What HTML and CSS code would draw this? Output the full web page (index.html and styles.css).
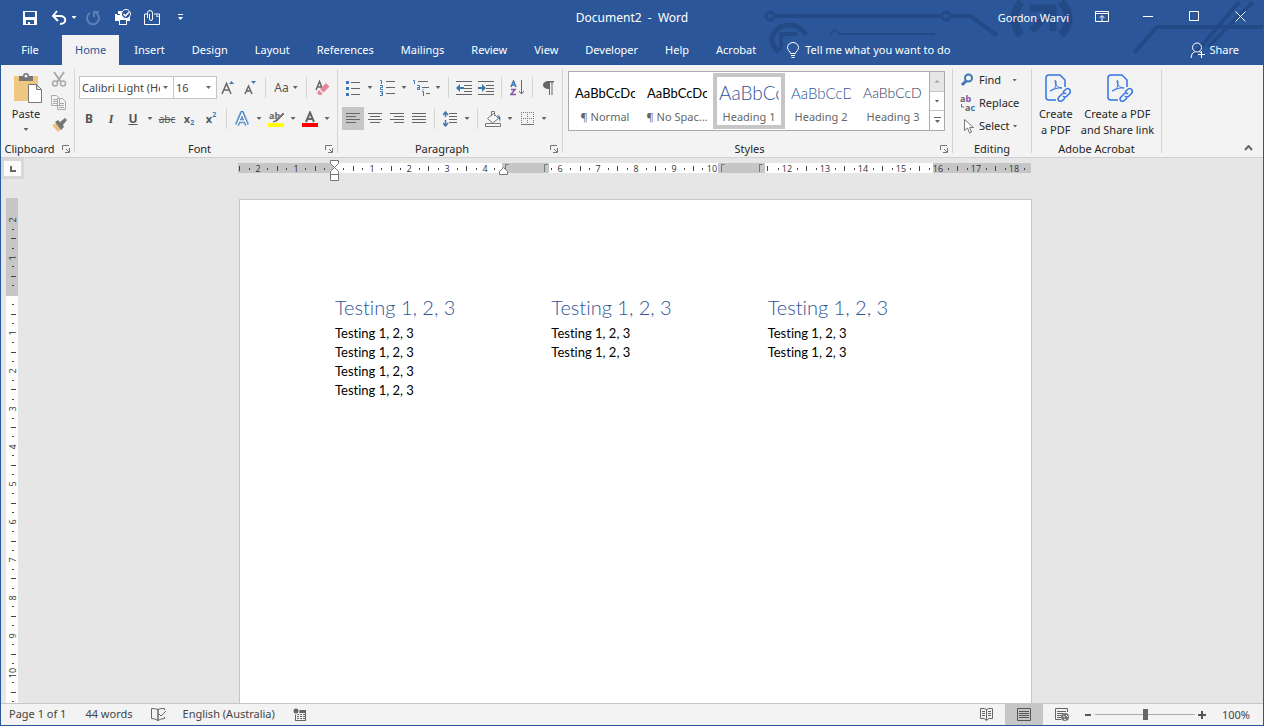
FILE: index.html
```html
<!DOCTYPE html>
<html lang="en-AU">
<head>
<meta charset="utf-8">
<title>Document2 - Word</title>
<link rel="stylesheet" href="styles.css">
</head>
<body>
<div class="window">
  <header class="top">
    <svg class="circuit" width="524" height="66" viewBox="0 0 524 66" fill="none" stroke="#234a86" stroke-width="4" aria-hidden="true">
      <g stroke-width="3"><circle cx="31" cy="16" r="4"/><circle cx="207" cy="16" r="4"/></g>
      <path d="M35 16H203M211 16H231L258 35"/>
      <path d="M92 35a4 4 0 0 1 8-1M99 34H196" stroke-width="2"/>
      <path d="M40 52Q32 45 33 38Q37 25 50 25Q61 25 67 35" stroke-width="5"/>
      <path d="M42 50V34H58" stroke-width="4"/>
      <path d="M282 2Q269 18 282 35M322 2Q337 18 322 35" stroke-width="8"/>
      <path d="M291 8H314V31M312 10L293 31" stroke-width="7"/>
      <path d="M395 53L418 27H524M500 2L455 55M514 2L469 47"/>
    </svg>
    <div class="titlebar">
      <div class="quick">
        <button class="qbtn" aria-label="Save"><svg width="16" height="16"><path fill="#fff" fill-rule="evenodd" d="M1 1h14v14H1zM3 2v5h10V2zM4 10v4h2v-2h2v2h4v-4z"/></svg></button>
        <button class="qbtn undo" aria-label="Undo"><svg width="16" height="16" fill="none" stroke="#fff" stroke-width="2"><path d="M6 1L2 6l5 5M2 6h7c7 0 7 8 0 8"/></svg></button>
        <button class="more" aria-label="Undo history"><i class="caret light"></i></button>
        <button class="qbtn redo" aria-label="Redo" disabled><svg width="16" height="16" fill="none" stroke="#5f80b3" stroke-width="2"><path d="M5 3a6 6 0 1 0 6 0M9 7V2h5"/></svg></button>
        <button class="qbtn" aria-label="Quick print"><svg width="18" height="17"><path fill="#fff" d="M1 5h2v1h3V5H4V2h4v4h8v6h-3v4H5v-4H1z"/><circle cx="12" cy="5" r="4.500" fill="#2b579a" stroke="#fff"/><path d="M9.500 5l2 2 3.500-4" fill="none" stroke="#fff" stroke-width="1.500"/><path d="M6 11h6v4H6z" fill="#2b579a"/></svg></button>
        <button class="qbtn attach" aria-label="Email attachment"><svg width="18" height="16" fill="none" stroke="#fff"><path d="M4 4H1.500v10.500h15V4H11M13 6h2v1M4.500 8V3a2 2 0 0 1 5 0v6a1.500 1.500 0 0 1-3 0V4"/></svg></button>
        <button class="qbtn" aria-label="Customize toolbar"><svg width="9" height="8"><path fill="#fff" d="M2 0h5v1H2zM2 3h5L4.500 6z"/></svg></button>
      </div>
      <h1 class="doc-title">Document2&nbsp; -&nbsp; Word</h1>
      <div class="account">
        <button class="user">Gordon Warvi</button>
        <button class="winbtn" aria-label="Ribbon display options"><svg width="14" height="11" fill="none" stroke="#fff"><path d="M.5.5h13v10H.5zM1 2.500h12M7 10V5M4.500 7L7 4.500 9.500 7"/></svg></button>
        <button class="winbtn" aria-label="Minimize"><svg width="10" height="10"><path stroke="#fff" d="M0 5.500h10"/></svg></button>
        <button class="winbtn" aria-label="Maximize"><svg width="10" height="10"><path fill="none" stroke="#fff" d="M.5.5h9v9h-9z"/></svg></button>
        <button class="winbtn" aria-label="Close"><svg width="11" height="11"><path stroke="#fff" d="M.5.5l10 10M10.500.5l-10 10"/></svg></button>
      </div>
    </div>
    <nav class="tabs">
      <button class="tab file">File</button>
      <button class="tab active">Home</button>
      <button class="tab">Insert</button>
      <button class="tab">Design</button>
      <button class="tab">Layout</button>
      <button class="tab">References</button>
      <button class="tab">Mailings</button>
      <button class="tab">Review</button>
      <button class="tab">View</button>
      <button class="tab">Developer</button>
      <button class="tab">Help</button>
      <button class="tab">Acrobat</button>
      <button class="tab tell"><svg width="12" height="17" fill="none" stroke="#fff"><path d="M3.500 11.500c0-2-3-3-3-6a5.500 5 0 0 1 11 0c0 3-3 4-3 6zM4 13.500h4M4.500 15.500h3"/></svg>Tell me what you want to do</button>
      <button class="share"><svg width="15" height="17" fill="none" stroke="#fff"><circle cx="7" cy="5.500" r="4.500"/><path d="M1 16q0-5 4-6.500M8 12.500h7M11.500 9v7M9 9.500l2 1"/></svg>Share</button>
    </nav>
  </header>

  <section class="ribbon" aria-label="Home">
    <div class="group clipboard">
      <div class="body">
        <button class="paste"><svg width="30" height="31"><path fill="#eec880" d="M1 3h24v25H1z"/><path fill="#777" d="M6 3h4q0-3 3-3t3 3h4v5H6z"/><circle cx="13" cy="3" r="1.500" fill="#f3f3f3"/><path fill="#fff" stroke="#777" d="M15.500 11.500h8l5 5v13h-13zM23.500 11.500v5h5"/></svg><span>Paste</span><i class="caret"></i></button>
        <div class="clip-tools">
          <button aria-label="Cut"><svg width="16" height="16" fill="none" stroke="#aaa" stroke-width="1.500"><path d="M3 1l7 10M13 1L6 11" stroke-width="2"/><circle cx="4" cy="12.500" r="2.500"/><circle cx="12" cy="12.500" r="2.500"/></svg></button>
          <button aria-label="Copy"><svg width="16" height="15" fill="#f3f3f3" stroke="#aaa"><path d="M.5.5h5l3 3v7h-8zM2 4.500h4M2 6.500h4M2 8.500h4M6.500 3.500h5l3 3v8h-8zM8 8.500h5M8 10.500h5M8 12.500h5"/></svg></button>
          <button aria-label="Format painter"><svg width="17" height="15"><path fill="#eec080" d="M1 7l5-2 5 5-4 4z"/><path fill="#777" d="M4 4l3-2 2 2 5-4 2 2-4 5 1 2-3 3z"/></svg></button>
        </div>
      </div>
      <div class="caption"><span>Clipboard</span><button class="launch" aria-label="Clipboard settings"><svg width="8" height="8"><use href="#launcher"/></svg></button></div>
    </div>

    <div class="group font">
      <div class="body rows">
        <div class="row">
          <label class="combo family"><select aria-label="Font"><option>Calibri Light (Headings)</option></select><i class="caret"></i></label>
          <label class="combo size"><select aria-label="Font size"><option>16</option></select><i class="caret"></i></label>
          <button class="tool" aria-label="Grow font"><svg width="16" height="16"><path d="M2 14L6.500 3.500 11 14M4 10h5" fill="none" stroke="#666" stroke-width="1.500"/><path fill="#3e77b5" d="M9 4l2.500-3L14 4z"/></svg></button>
          <button class="tool" aria-label="Shrink font"><svg width="16" height="16"><path d="M3 14L6.500 6 10 14M4 11h5" fill="none" stroke="#666" stroke-width="1.500"/><path fill="#3e77b5" d="M9 1h5l-2.500 3z"/></svg></button>
          <span class="sep"></span>
          <button class="tool case" aria-label="Change case">Aa<i class="caret"></i></button>
          <span class="sep"></span>
          <button class="tool" aria-label="Clear formatting"><svg width="16" height="16"><path d="M2 10L5.500 1.500 8 8M3 7h4" fill="none" stroke="#666" stroke-width="1.500"/><path fill="#e8879a" d="M6 9l6-6 3.500 3.500-6 6zM5 10l3.500 3.500L7 15H5l-2-2z"/></svg></button>
        </div>
        <div class="row">
          <button class="tool bold">B</button>
          <button class="tool italic">I</button>
          <button class="tool underline">U</button>
          <button class="more" aria-label="Underline style"><i class="caret"></i></button>
          <button class="tool strike">abc</button>
          <button class="tool script">x<sub>2</sub></button>
          <button class="tool script">x<sup>2</sup></button>
          <span class="sep"></span>
          <button class="tool" aria-label="Text effects"><svg width="16" height="16" fill="none"><path d="M3 14L8 2l5 12M5 10h6" stroke="#9dc0e6" stroke-width="5"/><path d="M3 14L8 2l5 12M5 10h6" stroke="#2f6eae" stroke-width="3"/><path d="M3 14L8 2.500l5 11.500M5 10h6" stroke="#fff" stroke-width="1.500"/></svg></button>
          <button class="more" aria-label="Text effects options"><i class="caret"></i></button>
          <button class="tool" aria-label="Text highlight"><svg width="17" height="16"><text x="1" y="8" class="glyph">ab</text><path d="M15 2L8 9l-3 2 4-1 7-7z" fill="#777" stroke="#777"/><path fill="#ff0" d="M0 12h16v4H0z"/></svg></button>
          <button class="more" aria-label="Highlight colour"><i class="caret"></i></button>
          <button class="tool" aria-label="Font colour"><svg width="16" height="16"><path d="M4 11L8 1.500 12 11M5.500 8h5" fill="none" stroke="#666" stroke-width="2"/><path fill="red" d="M0 12h16v4H0z"/></svg></button>
          <button class="more" aria-label="Font colour options"><i class="caret"></i></button>
        </div>
      </div>
      <div class="caption"><span>Font</span><button class="launch" aria-label="Font settings"><svg width="8" height="8"><use href="#launcher"/></svg></button></div>
    </div>

    <div class="group paragraph">
      <div class="body rows">
        <div class="row">
          <button class="tool" aria-label="Bullets"><svg width="14" height="16"><path stroke="#666" d="M5 2.500h9M5 8.500h9M5 14.500h9"/><path fill="#3e77b5" d="M0 1h3v3H0zM0 7h3v3H0zM0 13h3v3H0z"/></svg></button>
          <button class="more" aria-label="Bullet library"><i class="caret"></i></button>
          <button class="tool" aria-label="Numbering"><svg width="15" height="17"><path stroke="#666" d="M6 2.500h9M6 8.500h9M6 14.500h9"/><path fill="none" stroke="#3e77b5" d="M0 1.500h1.500V5M0 6.500h2.500v2H.5v2H3M0 12.500h2.500v4H0M1 14.500h2"/></svg></button>
          <button class="more" aria-label="Numbering library"><i class="caret"></i></button>
          <button class="tool" aria-label="Multilevel list"><svg width="17" height="17"><path stroke="#666" d="M5 2.500h10M9 8.500h7M13 14.500h4"/><path fill="none" stroke="#3e77b5" d="M0 1.500h1.500V5M4 6.500h2.500v4h-2v-2h2M9 12.500h1.500V17M10 10v1"/></svg></button>
          <button class="more" aria-label="List library"><i class="caret"></i></button>
          <span class="sep"></span>
          <button class="tool" aria-label="Decrease indent"><svg width="16" height="14"><path stroke="#666" d="M0 .5h16M8 4.500h8M8 7.500h8M8 10.500h8M0 13.500h16"/><path fill="#3e77b5" d="M0 7l4-4v3h4v2H4v3z"/></svg></button>
          <button class="tool" aria-label="Increase indent"><svg width="16" height="14"><path stroke="#666" d="M0 .5h16M8 4.500h8M8 7.500h8M8 10.500h8M0 13.500h16"/><path fill="#3e77b5" d="M8 7L4 3v3H0v2h4v3z"/></svg></button>
          <span class="sep"></span>
          <button class="tool" aria-label="Sort"><svg width="15" height="16" fill="none"><path stroke="#3e77b5" stroke-width="1.500" d="M1 7l2.500-6L6 7M2 5h3"/><path stroke="#8c4fa8" stroke-width="1.500" d="M1 9.500h4L1 14.500h5"/><path stroke="#666" d="M11.500 0v14M9 11l2.500 3 2.500-3"/></svg></button>
          <span class="sep"></span>
          <button class="tool" aria-label="Show paragraph marks"><svg width="11" height="14"><path fill="#666" d="M11 0v1.500H9.500V14h-1V1.500H7V14H6V8C-2 8-2 0 6 0z"/></svg></button>
        </div>
        <div class="row">
          <button class="tool pressed" aria-label="Align left"><svg width="14" height="11"><path stroke="#666" d="M0 .5h14M0 3.500h10M0 6.500h14M0 9.500h10"/></svg></button>
          <button class="tool" aria-label="Centre"><svg width="14" height="11"><path stroke="#666" d="M0 .5h14M2 3.500h10M0 6.500h14M2 9.500h10"/></svg></button>
          <button class="tool" aria-label="Align right"><svg width="14" height="11"><path stroke="#666" d="M0 .5h14M4 3.500h10M0 6.500h14M4 9.500h10"/></svg></button>
          <button class="tool" aria-label="Justify"><svg width="14" height="11"><path stroke="#666" d="M0 .5h14M0 3.500h14M0 6.500h14M0 9.500h14"/></svg></button>
          <span class="sep"></span>
          <button class="tool" aria-label="Line spacing"><svg width="14" height="16" fill="none"><path stroke="#666" d="M6 2.500h8M6 5.500h8M6 8.500h8M6 11.500h8"/><path stroke="#3e77b5" stroke-width="1.500" d="M2.500 1v5M0 4l2.500-3L5 4M2.500 9v6M0 12l2.500 3L5 12"/></svg></button>
          <button class="more" aria-label="Line spacing options"><i class="caret"></i></button>
          <span class="sep"></span>
          <button class="tool" aria-label="Shading"><svg width="17" height="16"><path fill="#f8f8f8" stroke="#777" d="M2.500 7.500l6-5 5 5-6 4.500zM6.500 5V.5h3V5M.5 12.500h15v3H.5z"/><path fill="#3e77b5" d="M12 4q5 1 3 7l-1-3z"/></svg></button>
          <button class="more" aria-label="Shading colour"><i class="caret"></i></button>
          <button class="tool" aria-label="Borders"><svg width="13" height="13" fill="none" stroke="#777"><path stroke-dasharray="1 1" d="M0 .5h13M0 6.500h13M.5 0v12M6.500 0v12M12.500 0v12"/><path d="M0 12.500h13"/></svg></button>
          <button class="more" aria-label="Border options"><i class="caret"></i></button>
        </div>
      </div>
      <div class="caption"><span>Paragraph</span><button class="launch" aria-label="Paragraph settings"><svg width="8" height="8"><use href="#launcher"/></svg></button></div>
    </div>

    <div class="group styles">
      <div class="body">
        <div class="gallery">
          <button class="style"><b>AaBbCcDc</b><span>¶ Normal</span></button>
          <button class="style"><b>AaBbCcDc</b><span>¶ No Spac...</span></button>
          <button class="style h1 chosen"><b>AaBbCc</b><span>Heading 1</span></button>
          <button class="style h2"><b>AaBbCcD</b><span>Heading 2</span></button>
          <button class="style h3"><b>AaBbCcD</b><span>Heading 3</span></button>
          <div class="scroller">
            <button aria-label="Scroll up" disabled><i class="caret up"></i></button>
            <button aria-label="Scroll down"><i class="caret"></i></button>
            <button aria-label="More styles"><svg width="7" height="7"><path fill="#666" d="M0 0h7v1H0zM1 3h5L3.500 6z"/></svg></button>
          </div>
        </div>
      </div>
      <div class="caption"><span>Styles</span><button class="launch" aria-label="Styles pane"><svg width="8" height="8"><use href="#launcher"/></svg></button></div>
    </div>

    <div class="group editing">
      <div class="body list">
        <button><svg width="16" height="14"><circle cx="8.500" cy="5" r="3.500" fill="none" stroke="#3e77b5" stroke-width="2"/><path d="M6 8l-4 4" stroke="#3e77b5" stroke-width="3"/></svg><span class="find">Find</span><i class="caret"></i></button>
        <button><svg width="16" height="18"><text x="0" y="8" class="glyph">a<tspan class="violet">b</tspan></text><text x="5" y="17" class="glyph">a<tspan class="blue">c</tspan></text><path d="M1.500 10v3H4" fill="none" stroke="#3e77b5"/></svg><span>Replace</span></button>
        <button><svg width="16" height="15"><path d="M4.500.5v11l3-2.500 2 5 2-1-2-4.500h4z" fill="#fff" stroke="#777"/></svg><span>Select</span><i class="caret"></i></button>
      </div>
      <div class="caption"><span>Editing</span></div>
    </div>

    <div class="group acrobat">
      <div class="body">
        <button><svg width="26" height="29"><use href="#pdf"/></svg><span>Create<br>a PDF</span></button>
        <button><svg width="26" height="29"><use href="#pdf"/></svg><span>Create a PDF<br>and Share link</span></button>
      </div>
      <div class="caption"><span>Adobe Acrobat</span></div>
    </div>
    <button class="collapse" aria-label="Collapse ribbon"><svg width="9" height="6"><path d="M1 5l3.500-4L8 5" fill="none" stroke="#666" stroke-width="2"/></svg></button>
  </section>

  <main class="workspace">
    <aside class="side">
      <button class="tabstop" aria-label="Tab selector"><svg width="6" height="6"><path d="M1 0v5h5" fill="none" stroke="#666" stroke-width="2"/></svg></button>
      <svg class="vruler" width="12" height="506">
        <path fill="#fff" d="M0 0h12v506H0z"/><path fill="#c6c6c6" d="M0 0h12v98H0z"/>
        <path stroke="#444" d="M5 40.500h5M5 78.500h5M5 116.500h5M5 154.500h5M5 191.500h5M5 229.500h5M5 267.500h5M5 305.500h5M5 343.500h5M5 380.500h5M5 418.500h5M5 456.500h5M5 494.500h5"/>
        <path stroke="#444" d="M6 31.500h2M6 50.500h2M6 68.500h2M6 87.500h2M6 106.500h2M6 125.500h2M6 144.500h2M6 163.500h2M6 182.500h2M6 201.500h2M6 220.500h2M6 238.500h2M6 257.500h2M6 276.500h2M6 295.500h2M6 314.500h2M6 333.500h2M6 352.500h2M6 371.500h2M6 390.500h2M6 408.500h2M6 427.500h2M6 446.500h2M6 465.500h2M6 484.500h2M6 503.500h2"/>
        <g class="num" transform="rotate(-90)">
          <text x="-22" y="10">2</text><text x="-60" y="10">1</text><text x="-135" y="10">1</text><text x="-173" y="10">2</text><text x="-211" y="10">3</text><text x="-249" y="10">4</text><text x="-286" y="10">5</text><text x="-324" y="10">6</text><text x="-362" y="10">7</text><text x="-400" y="10">8</text><text x="-438" y="10">9</text><text x="-475" y="10">10</text>
        </g>
      </svg>
    </aside>
    <div class="canvas">
      <svg class="hruler" width="793" height="22">
        <path fill="#fff" d="M0 3h793v10H0z"/>
        <path fill="#c6c6c6" d="M0 3h96v10H0zM264 3h47v10h-47zM480 3h47v10h-47zM695 3h98v10h-98z"/>
        <path stroke="#444" d="M1.500 6v5M39.500 6v5M77.500 6v5M115.500 6v5M153.500 6v5M190.500 6v5M228.500 6v5M342.500 6v5M379.500 6v5M417.500 6v5M455.500 6v5M529.500 6v5M568.500 6v5M606.500 6v5M644.500 6v5M681.500 6v5M719.500 6v5M757.500 6v5"/>
        <path stroke="#444" d="M11.500 8v2M29.500 8v2M48.500 8v2M67.500 8v2M86.500 8v2M105.500 8v2M124.500 8v2M143.500 8v2M162.500 8v2M181.500 8v2M200.500 8v2M219.500 8v2M238.500 8v2M256.500 8v2M313.500 8v2M332.500 8v2M351.500 8v2M370.500 8v2M389.500 8v2M408.500 8v2M427.500 8v2M446.500 8v2M464.500 8v2M540.500 8v2M559.500 8v2M578.500 8v2M597.500 8v2M616.500 8v2M635.500 8v2M654.500 8v2M672.500 8v2M691.500 8v2M710.500 8v2M729.500 8v2M748.500 8v2M767.500 8v2M786.500 8v2"/>
        <path fill="none" stroke="#777" d="M267.500 12V4.500h3M306.500 12V4.500h3M483.500 12V4.500h3M521.500 12V4.500h3"/>
        <g class="num">
          <text x="20" y="12">2</text><text x="58" y="12">1</text><text x="134" y="12">1</text><text x="171" y="12">2</text><text x="209" y="12">3</text><text x="247" y="12">4</text><text x="322" y="12">6</text><text x="360" y="12">7</text><text x="398" y="12">8</text><text x="436" y="12">9</text><text x="474" y="12">10</text><text x="549" y="12">12</text><text x="587" y="12">13</text><text x="625" y="12">14</text><text x="663" y="12">15</text><text x="700" y="12">16</text><text x="738" y="12">17</text><text x="776" y="12">18</text>
        </g>
        <path fill="#fff" stroke="#777" d="M92.500.5h8v3l-4 4-4-4zM96.500 7.500l4 4v9h-8v-9zM92.500 14.500h8M265.500 7.500l4 4v3h-8v-3z"/>
      </svg>
      <article class="page">
        <section><h2>Testing 1, 2, 3</h2><p>Testing 1, 2, 3</p><p>Testing 1, 2, 3</p><p>Testing 1, 2, 3</p><p>Testing 1, 2, 3</p></section>
        <section><h2>Testing 1, 2, 3</h2><p>Testing 1, 2, 3</p><p>Testing 1, 2, 3</p></section>
        <section><h2>Testing 1, 2, 3</h2><p>Testing 1, 2, 3</p><p>Testing 1, 2, 3</p></section>
      </article>
    </div>
  </main>

  <footer class="status">
    <button class="pages">Page 1 of 1</button>
    <button class="words">44 words</button>
    <button aria-label="Proofing"><svg width="15" height="13" fill="none" stroke="#666"><path d="M7 1.500Q4 .5.5.5v10Q4 10.500 7 12.500zV12.500Q9 11 13.500 10.500V9M7 1.500Q8 .5 13.500.5V2M8 6l2 2 5-5"/></svg></button>
    <button class="language">English (Australia)</button>
    <button aria-label="Macro recording"><svg width="13" height="13"><path fill="#666" fill-rule="evenodd" d="M2 2h11v11H2zM3 5v7h9V5z"/><path stroke="#666" stroke-dasharray="2 1" d="M4 6.500h8M4 8.500h8M4 10.500h8"/><circle cx="3" cy="3" r="3.500" fill="#f3f3f3"/><circle cx="3" cy="3" r="2.500" fill="#666"/></svg></button>
    <div class="view">
      <button aria-label="Read mode"><svg width="13" height="13" fill="none" stroke="#666"><path d="M6.500 1.500L4 .5H.5v10H4l2.500 2 2.500-2h3.500V.5H9L6.500 1.500V12M2 3.500h3M2 5.500h3M2 7.500h3M8 3.500h3M8 5.500h3M8 7.500h3"/></svg></button>
      <button class="on" aria-label="Print layout"><svg width="14" height="13" fill="none" stroke="#555"><path d="M.5.5h13v12H.5zM2 3.500h10M2 5.500h10M2 7.500h10M2 9.500h10"/></svg></button>
      <button aria-label="Web layout"><svg width="15" height="14"><path d="M12.500 4V.5H.5v11H6M2 3.500h9M2 5.500h6M2 7.500h4M2 9.500h4" fill="none" stroke="#666"/><circle cx="10" cy="9" r="4" fill="#777"/><path d="M8 8l2 1M11 7l2 2M9 11l2 1" stroke="#f3f3f3"/></svg></button>
      <button class="step" aria-label="Zoom out"><svg width="6" height="6"><path d="M0 3h6" stroke="#555" stroke-width="2"/></svg></button>
      <input class="zoom" type="range" min="0" max="100" value="50" aria-label="Zoom">
      <button class="step" aria-label="Zoom in"><svg width="8" height="8"><path d="M0 4h8M4 0v8" stroke="#555" stroke-width="2"/></svg></button>
      <button class="percent">100%</button>
    </div>
  </footer>
</div>
<svg class="defs" width="0" height="0" aria-hidden="true">
  <symbol id="launcher"><path d="M.5 5V.5H7M4 4l3 3M7.500 3v4.500H3" fill="none" stroke="#777"/></symbol>
  <symbol id="pdf"><g fill="none" stroke="#3574e2" stroke-width="1.500"><path d="M11 26H4q-3 0-3-3V4q0-3 3-3h11l5 5v7"/><path d="M5 17q7-2 6-10-1-2-1 1 1 6 7 6-4-1-12 3" stroke-width="1"/><path d="M18 18l2-2q3-3 5 0 1 2-1 4l-2 2q-2 2-4 0M21 20q-2-2-4 0l-3 3q-2 2 0 4 2 1 4-1l2-2"/></g></symbol>
</svg>
</body>
</html>
```

FILE: styles.css
```css
* { box-sizing: border-box; }
html, body { height: 100%; margin: 0; }
body { font: 11px/16px "Noto Sans", "Open Sans", sans-serif; color: #262626; }
button { font: inherit; color: inherit; background: none; border: 0; padding: 0; margin: 0; display: flex; align-items: center; justify-content: center; white-space: nowrap; }
svg { display: block; flex: none; }
.defs { position: absolute; }
.window { height: 100%; display: flex; flex-direction: column; border: 1px solid #2b579a; border-top: 0; background: #e6e6e6; }

.caret { flex: none; width: 5px; height: 3px; background: #666; clip-path: polygon(0 0, 100% 0, 50% 100%); }
.caret.light { background: #fff; }
.caret.up { background: #aaa; clip-path: polygon(0 100%, 100% 100%, 50% 0); }

/* Title bar and tabs */
.top { position: relative; background: #2b579a; color: #fff; }
.circuit { position: absolute; top: 0; right: 0; }
.titlebar { position: relative; display: grid; grid-template-columns: 1fr auto 1fr; height: 35px; }
.quick { display: flex; align-items: center; padding-left: 19px; }
.qbtn { width: 20px; height: 24px; }
.undo { margin-left: 9px; }
.quick .more { width: 10px; }
.redo { margin: 0 10px 0 4px; }
.attach { margin: 0 8px 0 9px; }
.doc-title { margin: 0; font: inherit; font-size: 12px; line-height: 35px; }
.account { display: flex; justify-content: flex-end; }
.user { margin-right: 10px; }
.winbtn { width: 46px; height: 32px; }
.tabs { position: relative; display: flex; height: 30px; }
.tab { padding: 0 12px; margin-right: 3px; }
.tab.file { width: 61px; padding: 0 3px 0 0; margin: 0; }
.tab.active { padding: 0 13px; background: #f3f3f3; color: #2b579a; }
.tab.tell { margin-left: 4px; gap: 6px; }
.share { margin-left: auto; padding: 0 24px; gap: 4px; }

/* Ribbon */
.ribbon { display: flex; height: 93px; padding: 4px 0; background: #f3f3f3; border-bottom: 1px solid #d0d0d0; }
.group { flex: none; display: flex; flex-direction: column; border-right: 1px solid #d5d5d5; }
.body { flex: 1; display: flex; }
.caption { display: flex; align-items: center; height: 9px; }
.caption span { flex: 1; text-align: center; }
.launch { width: 16px; height: 12px; }
.clipboard { width: 74px; }
.paste { width: 50px; padding-top: 4px; flex-direction: column; justify-content: flex-start; }
.paste svg { margin-left: 3px; }
.paste .caret { margin-top: 6px; }
.paste span { margin-top: 2px; }
.clip-tools { display: flex; flex-direction: column; gap: 7px; padding-top: 2px; }
.clip-tools button { width: 16px; height: 16px; }
.rows { flex-direction: column; gap: 8px; padding-top: 7px; }
.row { display: flex; height: 23px; }
.font { width: 263px; padding-left: 3px; }
.combo { position: relative; height: 23px; border: 1px solid #c6c6c6; background: #fff; }
.combo select { appearance: none; width: 100%; height: 21px; padding: 0 13px 0 2px; border: 0; background: transparent; font: inherit; color: #444; overflow: hidden; }
.combo .caret { position: absolute; right: 5px; top: 9px; }
.family { width: 95px; margin-left: 1px; }
.size { width: 44px; margin-left: -1px; }
.tool { width: 22px; height: 23px; color: #555; }
.more { width: 12px; }
.pressed { background: #c6c6c6; }
.sep { width: 9px; height: 21px; margin-top: 1px; background: linear-gradient(#d5d5d5, #d5d5d5) center / 1px 100% no-repeat; }
.case { width: 32px; gap: 4px; font-size: 12px; }
.bold { font-size: 12px; font-weight: 700; }
.italic { font: italic 700 13px "Liberation Serif", serif; }
.underline { font-size: 12px; font-weight: 700; text-decoration: underline; }
.strike { font-size: 10px; text-decoration: line-through; }
.script { font-weight: 700; }
.script sub, .script sup { font-size: 7px; line-height: 7px; color: #3e77b5; }
.script sub { align-self: flex-end; margin-bottom: 4px; }
.script sup { align-self: flex-start; margin-top: 4px; }
.glyph { font: 700 9px "Open Sans", sans-serif; fill: #666; }
.violet { fill: #8c4fa8; }
.blue { fill: #3e77b5; }
.paragraph { width: 225px; }
.paragraph .row { padding-left: 4px; }

.styles { width: 390px; padding-left: 5px; }
.styles .body { align-items: flex-start; padding-top: 2px; }
.styles .caption { margin-left: -5px; }
.gallery { display: flex; height: 60px; border: 1px solid #ababab; background: #fff; }
.style { width: 72px; height: 58px; padding: 0 6px; flex-direction: column; color: #666; }
.style b { width: 60px; height: 32px; overflow: hidden; text-align: left; font: 13px/32px Lato, sans-serif; color: #000; }
.style.h1 b { font-size: 19px; font-weight: 300; }
.style.h2 b { font-size: 15px; font-weight: 300; }
.style.h3 b { font-size: 14px; font-weight: 300; }
.style.h1 b, .style.h2 b { color: #2f5496; }
.style.h3 b { color: #1f3763; }
.style.chosen { height: 56px; margin-top: 1px; padding: 0 2px; border: 4px solid #c6c6c6; }
.scroller { width: 15px; display: flex; flex-direction: column; border-left: 1px solid #ababab; }
.scroller button { flex: 1; }
.scroller button + button { border-top: 1px solid #c6c6c6; }
.scroller button:disabled { background: #e6e6e6; }

.editing { width: 79px; }
.list { flex-direction: column; padding: 0 0 0 7px; gap: 5px; }
.list button { height: 18px; justify-content: flex-start; }
.list button:first-child { margin-top: 2px; }
.list span { margin: 0 3px; }
.list .find { margin-right: 11px; }
.acrobat { width: 130px; }
.acrobat .body button { flex-direction: column; justify-content: flex-start; padding: 5px 4px 0; text-align: center; }
.acrobat .body { justify-content: center; }
.acrobat .body svg { margin-left: 5px; }
.acrobat .body span { margin-top: 3px; }
.collapse { align-self: flex-end; margin: 0 10px 0 auto; height: 10px; }

/* Document area */
.workspace { flex: 1; min-height: 0; display: flex; overflow: hidden; }
.side { width: 23px; flex: none; display: flex; flex-direction: column; }
.tabstop { width: 23px; height: 21px; flex: none; background: #fbfbfb; border: 3px solid #d8d8d8; }
.vruler { margin: 19px 0 0 5px; }
.canvas { flex: 1; display: flex; flex-direction: column; align-items: center; padding: 2px 16px 0 0; }
.hruler { margin-right: 2px; }
.num { font: 9px "Open Sans", sans-serif; fill: #333; text-anchor: middle; }
.page { width: 793px; flex: 1; margin-top: 17px; padding: 94px 95px 0; display: grid; grid-template-columns: repeat(3, 1fr); column-gap: 48px; align-content: start; background: #fff; border: 1px solid #c6c6c6; border-bottom: 0; color: #000; font-variant-ligatures: none; }
.page h2 { margin: 0 0 3px; font-family: Lato, sans-serif; font-size: 20px; font-weight: 300; line-height: 27px; color: #2f5496; }
.page p { margin: 0; font-family: Lato, sans-serif; font-size: 13px; line-height: 19px; }

/* Status bar */
.status { height: 22px; flex: none; display: flex; padding-left: 8px; background: #f3f3f3; border-top: 1px solid #c6c6c6; color: #444; line-height: 18px; }
.status > button { height: 20px; }
.words { margin: 0 18px 0 19px; }
.language { margin: 0 18px 0 17px; }
.view { margin-left: auto; display: flex; }
.view > button { width: 38px; }
.view .on { background: #c6c6c6; }
.view .step { width: 14px; }
.zoom { appearance: none; width: 100px; margin: 0; background: linear-gradient(#aaa, #aaa) center / 100% 1px no-repeat; }
.zoom::-webkit-slider-thumb { appearance: none; width: 5px; height: 11px; background: #666; }
.view .percent { width: 54px; }
```
